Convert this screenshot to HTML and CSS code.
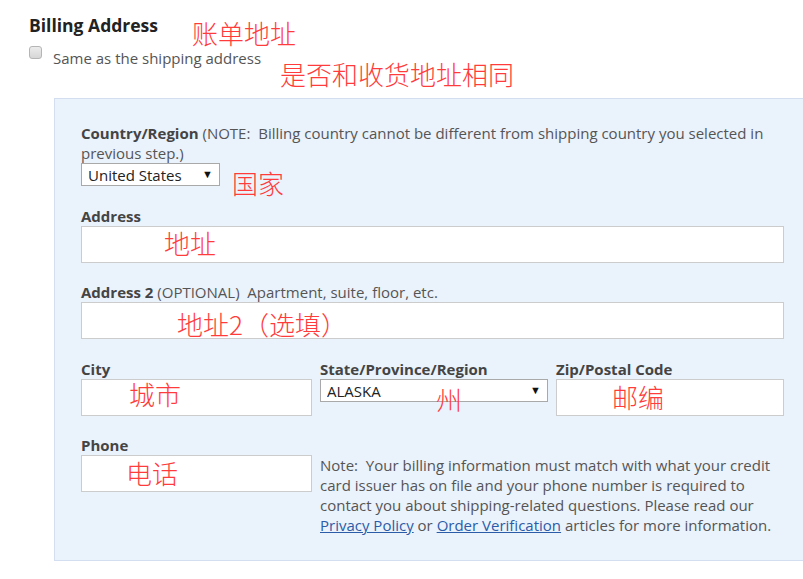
FILE: index.html
```html
<!DOCTYPE html>
<html lang="en">
<head>
  <meta charset="UTF-8">
  <meta name="viewport" content="width=device-width, initial-scale=1.0">
  <title>Billing Address</title>
  <link rel="stylesheet" href="styles.css">
</head>
<body>
  <div class="page">
    <h2 class="title">Billing Address</h2>

    <label class="same">
      <input type="checkbox" class="check">
      <span>Same as the shipping address</span>
    </label>

    <div class="panel">
      <div class="field">
        <p class="label"><b>Country/Region</b> (NOTE:&nbsp; Billing country cannot be different from shipping country you selected in previous step.)</p>
        <div class="select-wrap country">
          <select class="select">
            <option>United States</option>
          </select>
          <span class="arrow">&#9660;</span>
        </div>
      </div>

      <div class="field">
        <p class="label"><b>Address</b></p>
        <input type="text" class="input">
      </div>

      <div class="field">
        <p class="label"><b>Address 2</b> (OPTIONAL)&nbsp; Apartment, suite, floor, etc.</p>
        <input type="text" class="input">
      </div>

      <div class="grid">
        <div class="field">
          <p class="label"><b>City</b></p>
          <input type="text" class="input">
        </div>
        <div class="field">
          <p class="label"><b>State/Province/Region</b></p>
          <div class="select-wrap state">
            <select class="select">
              <option>ALASKA</option>
            </select>
            <span class="arrow">&#9660;</span>
          </div>
        </div>
        <div class="field">
          <p class="label"><b>Zip/Postal Code</b></p>
          <input type="text" class="input">
        </div>

        <div class="field last">
          <p class="label"><b>Phone</b></p>
          <input type="tel" class="input">
        </div>
        <p class="info">Note:&nbsp; Your billing information must match with what your credit card issuer has on file and your phone number is required to contact you about shipping-related questions. Please read our <a href="#">Privacy Policy</a> or <a href="#">Order Verification</a> articles for more information.</p>
      </div>
    </div>

    <!-- red annotations over the form -->
    <span class="cn" style="left:192px;top:20px">账单地址</span>
    <span class="cn" style="left:280px;top:61px">是否和收货地址相同</span>
    <span class="cn" style="left:232px;top:170px">国家</span>
    <span class="cn" style="left:164px;top:230px">地址</span>
    <span class="cn" style="left:177px;top:311px">地址2（选填）</span>
    <span class="cn" style="left:129px;top:381px">城市</span>
    <span class="cn" style="left:436px;top:386px">州</span>
    <span class="cn" style="left:612px;top:384px">邮编</span>
    <span class="cn" style="left:126px;top:460px">电话</span>
  </div>
</body>
</html>
```

FILE: styles.css
```css
html, body {
  overflow-x: hidden;
}
body {
  margin: 0;
  font-family: "Open Sans", "Liberation Sans", sans-serif;
  font-size: 15px;
  line-height: 20px;
  color: #555;
  background: #fff;
}
.page {
  position: relative;
  padding: 13px 0 0 29px;
}
.title {
  margin: 0;
  font-size: 17.5px;
  line-height: 24px;
  font-weight: bold;
  color: #222;
}
.same {
  display: flex;
  align-items: flex-start;
  margin-top: 11px;
  color: #555;
}
.check {
  appearance: none;
  width: 13px;
  height: 13px;
  margin: -2px 11px 0 0;
  border: 1px solid #b5b5b5;
  border-radius: 3px;
  background: linear-gradient(#ececec, #d6d6d6);
}
.panel {
  display: flex;
  flex-direction: column;
  margin: 30px -8px 0 25px;
  padding: 24px 26px 25px;
  background: #eaf2fc;
  border: 1px solid #d3dff0;
}
.field {
  margin-bottom: 19px;
}
.label {
  margin: 0;
  color: #555;
}
.label b {
  color: #444;
}
.input {
  display: block;
  width: 100%;
  height: 37px;
  margin: 0;
  border: 1px solid #ccc;
  background: #fff;
  box-sizing: border-box;
}
.select-wrap {
  position: relative;
  padding-bottom: 1px;
}
.select-wrap.country {
  width: 139px;
}
.select-wrap.state {
  width: 228px;
}
.select {
  appearance: none;
  display: block;
  width: 100%;
  height: 23px;
  margin: 0;
  padding: 0 0 0 6px;
  border: 1px solid #a9a9a9;
  border-radius: 0;
  background: #fff;
  font-family: "Open Sans", "Liberation Sans", sans-serif;
  font-size: 15px;
  color: #222;
}
.arrow {
  position: absolute;
  top: 4px;
  right: 7px;
  font-size: 11px;
  line-height: 14px;
  color: #111;
}
.grid {
  display: grid;
  grid-template-columns: 231px 228px 1fr;
  column-gap: 8px;
  margin-top: 1px;
}
.field.last {
  margin-bottom: 0;
}
.info {
  grid-column: 2 / span 2;
  margin: 20px 0 0;
  color: #555;
}
.info a {
  color: #2b5ca8;
}
.cn {
  position: absolute;
  font-family: "Noto Sans CJK SC", sans-serif;
  font-weight: 300;
  font-size: 26px;
  line-height: 26px;
  color: #ff3b3b;
  white-space: nowrap;
}
```
